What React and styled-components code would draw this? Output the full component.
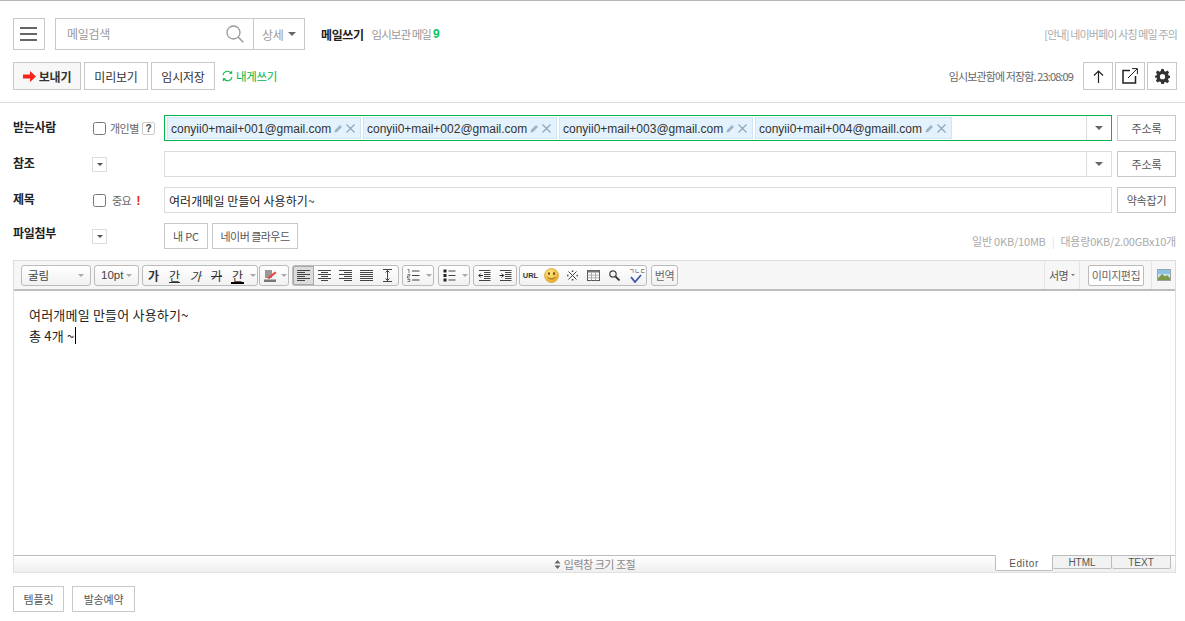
import React from "react";
import styled, { createGlobalStyle } from "styled-components";

const KR = `"Noto Sans CJK KR", "Liberation Sans", sans-serif`;
const LATIN = `"Liberation Sans", "Noto Sans CJK KR", sans-serif`;

const GlobalStyle = createGlobalStyle`
  html, body {
    margin: 0;
    padding: 0;
    background: #fff;
    overflow: hidden;
  }
  * {
    box-sizing: border-box;
  }
`;

const Page = styled.div`
  width: 1185px;
  height: 621px;
  border-top: 1px solid #b4b8bb;
  font-family: ${KR};
  font-size: 12px;
  color: #333;
`;
const Head = styled.div`
  display: flex;
  flex-direction: column;
  gap: 12px;
  padding: 17px 8px 12px 13px;
  border-bottom: 1px solid #ddd;
`;
const HeadRow = styled.div`
  display: flex;
  align-items: center;
`;
const Spacer = styled.div`
  flex: 1;
`;
const SquareButton = styled.button`
  display: flex;
  align-items: center;
  justify-content: center;
  width: ${(p) => p.$size || 30}px;
  height: ${(p) => p.$h || 28}px;
  margin-left: ${(p) => p.$ml || 0}px;
  padding: 0;
  background: #fff;
  border: 1px solid #c8c8c8;
`;
const SearchBox = styled.div`
  display: flex;
  align-items: center;
  width: 250px;
  height: 32px;
  margin-left: 10px;
  border: 1px solid #c8c8c8;
`;
const SearchText = styled.span`
  flex: 1;
  margin-top: -2px;
  padding-left: 11px;
  color: #999;
  font-size: 12px;
  letter-spacing: -0.3px;
`;
const SearchMore = styled.div`
  display: flex;
  align-items: center;
  gap: 5px;
  width: 51px;
  height: 30px;
  margin-left: 9px;
  padding-left: 8px;
  border-left: 1px solid #c8c8c8;
  color: #999;
  font-size: 12px;
  letter-spacing: -0.3px;
`;
const Caret = styled.i`
  display: block;
  width: 0;
  height: 0;
  border-left: ${(p) => p.$w || 4}px solid transparent;
  border-right: ${(p) => p.$w || 4}px solid transparent;
  border-top: ${(p) => p.$w || 4}px solid ${(p) => p.$color || "#666"};
`;
const PageTitle = styled.strong`
  margin-left: 16px;
  font-size: 12px;
  font-weight: 700;
  color: #222;
  letter-spacing: -0.4px;
`;
const DraftText = styled.span`
  margin-left: 8px;
  color: #999;
  font-size: 11.5px;
  letter-spacing: -0.95px;
`;
const DraftCount = styled.b`
  margin-left: 2px;
  color: #03c75a;
  font-family: ${LATIN};
  font-size: 12px;
`;
const Notice = styled.span`
  color: #aaa;
  font-size: 11px;
  letter-spacing: -0.85px;
`;
const TextButton = styled.button`
  display: flex;
  align-items: center;
  justify-content: center;
  gap: 3px;
  width: ${(p) => p.$w}px;
  height: ${(p) => p.$h || 28}px;
  margin-left: ${(p) => p.$ml || 0}px;
  padding: 0;
  background: ${(p) => (p.$primary ? "#f7f7f7" : "#fff")};
  border: 1px solid #c8c8c8;
  color: ${(p) => p.$color || "#333"};
  font-family: ${KR};
  font-size: ${(p) => p.$fs || 12}px;
  font-weight: ${(p) => (p.$primary ? 700 : 400)};
  letter-spacing: ${(p) => p.$ls ?? -0.2}px;
  white-space: nowrap;
`;
const SelfLink = styled.span`
  display: flex;
  align-items: center;
  gap: 3px;
  margin-left: 7px;
  color: #03b54a;
  font-size: 11.5px;
  letter-spacing: -0.3px;
`;
const SavedText = styled.span`
  margin-right: 10px;
  color: #666;
  font-size: 11px;
  letter-spacing: -0.88px;
`;
const Form = styled.div`
  display: flex;
  flex-direction: column;
  gap: 10px;
  padding: 12px 9px 0 13px;
`;
const FormRow = styled.div`
  display: flex;
  align-items: center;
  height: 26px;
`;
const Label = styled.label`
  width: 79px;
  margin-top: ${(p) => p.$mt ?? -3}px;
  color: #222;
  font-size: 12px;
  font-weight: 700;
  letter-spacing: -0.3px;
`;
const Option = styled.div`
  display: flex;
  align-items: center;
  width: 72px;
  color: #666;
  font-size: 11px;
  letter-spacing: -0.5px;
`;
const Check = styled.input.attrs({ type: "checkbox" })`
  width: 13px;
  height: 13px;
  margin: 0 ${(p) => p.$gap || 4}px 0 1px;
`;
const Help = styled.span`
  display: flex;
  align-items: center;
  justify-content: center;
  width: 13px;
  height: 13px;
  margin-left: 3px;
  border: 1px solid #ccc;
  border-radius: 2px;
  color: #444;
  font-family: ${LATIN};
  font-size: 10px;
  font-weight: 700;
`;
const Important = styled.b`
  margin-left: 5px;
  color: #f02d1c;
  font-family: ${LATIN};
  font-size: 13px;
`;
const Toggle = styled.span`
  display: flex;
  align-items: center;
  justify-content: center;
  width: 15px;
  height: 15px;
  border: 1px solid #ddd;
`;
const Field = styled.div`
  flex: 1;
  display: flex;
  align-items: center;
  height: 26px;
  padding-left: ${(p) => p.$pl || 0}px;
  border: 1px solid ${(p) => (p.$active ? "#03b54a" : "#ddd")};
  color: #222;
  font-size: 12px;
  letter-spacing: 0.08px;
`;
const Chips = styled.div`
  flex: 1;
  display: flex;
  gap: 2px;
  padding-left: 2px;
`;
const Chip = styled.div`
  display: flex;
  align-items: center;
  width: ${(p) => p.$w}px;
  height: 22px;
  padding: 2px 0 0 3px;
  background: #e4f2fd;
  border: 1px solid #cfe5f8;
  color: #333;
  font-family: ${LATIN};
  font-size: 12px;
  letter-spacing: 0;
  white-space: nowrap;
`;
const ChipIcons = styled.span`
  display: flex;
  align-items: center;
  gap: 3px;
  margin: -2px 0 0 3px;
`;
const FieldArrow = styled.div`
  display: flex;
  align-items: center;
  justify-content: center;
  width: 25px;
  height: 24px;
  border-left: 1px solid #ddd;
`;
const Side = styled.div`
  width: 64px;
  padding-left: 5px;
  display: flex;
`;
const AttachInfo = styled.span`
  margin: 0 0 0 auto;
  align-self: flex-end;
  color: #aaa;
  font-size: 11px;
  letter-spacing: -0.2px;
`;
const InfoBar = styled.i`
  margin: 0 6px;
  color: #d5e3ee;
  font-style: normal;
`;
const Editor = styled.div`
  margin: 11px 9px 0 13px;
  height: 313px;
  display: flex;
  flex-direction: column;
  border: 1px solid #ddd;
  border-bottom-color: #e2e2e2;
`;
const Toolbar = styled.div`
  display: flex;
  align-items: center;
  flex: none;
  height: 30px;
  padding: 0 0 0 7px;
  background: #f6f6f6;
  border-bottom: 2px solid #bdbdbd;
`;
const Select = styled.div`
  display: flex;
  align-items: center;
  justify-content: space-between;
  width: ${(p) => p.$w}px;
  height: 21px;
  margin-right: 3px;
  padding: 0 6px;
  background: linear-gradient(#fff, #f1f1f1);
  border: 1px solid #bbb;
  border-radius: 3px;
  color: #444;
  font-family: ${(p) => (p.$latin ? LATIN : KR)};
  font-size: 11.5px;
`;
const Group = styled.div`
  display: flex;
  align-items: center;
  height: 21px;
  margin-right: ${(p) => p.$mr ?? 3}px;
  background: linear-gradient(#fff, #f1f1f1);
  border: 1px solid #bbb;
  border-radius: 3px;
`;
const Tool = styled.span`
  position: relative;
  display: flex;
  align-items: center;
  justify-content: center;
  width: ${(p) => p.$w || 21}px;
  height: 19px;
  background: ${(p) => (p.$on ? "#dcdcdc" : "transparent")};
  box-shadow: ${(p) => (p.$on ? "inset 0 0 0 1px #a9a9a9" : "none")};
  color: #333;
  font-size: 12px;
  font-weight: ${(p) => (p.$bold ? 700 : 400)};
  font-style: ${(p) => (p.$italic ? "italic" : "normal")};
  text-decoration: ${(p) => p.$deco || "none"};
`;
const ColorBar = styled.i`
  position: absolute;
  left: 4px;
  right: 4px;
  bottom: 1px;
  height: 2px;
  background: #000;
`;
const UrlMark = styled.span`
  font-family: ${LATIN};
  font-size: 7.5px;
  font-weight: 700;
  color: #333;
`;
const SpellLetters = styled.span`
  position: absolute;
  top: 1px;
  left: 4px;
  font-size: 6px;
  line-height: 8px;
  color: #333;
`;
const SpellCheck = styled.svg`
  position: absolute;
  left: 5px;
  top: 8px;
`;
const TranslateTool = styled(Tool)`
  color: #666;
  font-size: 11px;
  letter-spacing: -0.4px;
`;
const SignBox = styled.div`
  display: flex;
  align-items: center;
  justify-content: center;
  gap: 3px;
  width: 36px;
  height: 28px;
  margin-left: auto;
  border-left: 1px solid #e4e4e4;
  border-right: 1px solid #e4e4e4;
  color: #555;
  font-size: 11px;
  letter-spacing: -0.6px;
`;
const ImageEdit = styled.span`
  display: flex;
  align-items: center;
  justify-content: center;
  width: 56px;
  height: 21px;
  margin-left: 8px;
  background: #fff;
  border: 1px solid #bbb;
  border-radius: 2px;
  color: #666;
  font-size: 11px;
  letter-spacing: -0.4px;
`;
const ImageSlot = styled.div`
  display: flex;
  align-items: center;
  justify-content: center;
  width: 24px;
  height: 28px;
  margin-left: 7px;
  border-left: 1px solid #e4e4e4;
`;
const Body = styled.div`
  flex: 1;
  padding: 13px 15px;
  color: #222;
  font-size: 13px;
  line-height: 21px;
  letter-spacing: 0.2px;
`;
const Cursor = styled.i`
  display: inline-block;
  width: 1px;
  height: 17px;
  margin-left: 1px;
  vertical-align: -3px;
  background: #000;
`;
const ResizeBar = styled.div`
  position: relative;
  display: flex;
  align-items: center;
  justify-content: center;
  gap: 3px;
  flex: none;
  height: 17px;
  background: linear-gradient(#fff, #efefef);
  border-top: 1px solid #bdbdbd;
  color: #888;
  font-size: 11px;
  letter-spacing: -0.5px;
`;
const Tabs = styled.div`
  position: absolute;
  right: 4px;
  top: -1px;
  display: flex;
`;
const Tab = styled.span`
  display: flex;
  align-items: center;
  justify-content: center;
  width: ${(p) => p.$w || 59}px;
  height: ${(p) => (p.$active ? 16 : 14)}px;
  background: ${(p) => (p.$active ? "#fff" : "#f2f2f2")};
  border: 1px solid #bdbdbd;
  border-top-color: ${(p) => (p.$active ? "#fff" : "#bdbdbd")};
  border-left-width: ${(p) => (p.$first ? 1 : 0)}px;
  border-radius: 0 0 2px 2px;
  color: #555;
  font-family: ${LATIN};
  font-size: 10px;
  letter-spacing: ${(p) => (p.$active ? "0.6px" : "0")};
`;
const Foot = styled.div`
  display: flex;
  gap: 8px;
  padding: 13px 0 0 13px;
`;

const Svg = ({ w = 13, h = 13, children }) => (
  <svg width={w} height={h} viewBox={`0 0 ${w} ${h}`} fill="none">
    {children}
  </svg>
);

const Lines = ({ rows }) => (
  <Svg w={13} h={13}>
    {rows.map(([x1, x2], i) => (
      <line key={i} x1={x1} x2={x2} y1={i * 2 + 1.5} y2={i * 2 + 1.5} stroke="#444" />
    ))}
  </Svg>
);

const Hamburger = () => (
  <Svg w={18} h={14}>
    <rect y="0" width="17" height="2" fill="#666" />
    <rect y="6" width="17" height="2" fill="#666" />
    <rect y="12" width="17" height="2" fill="#666" />
  </Svg>
);
const SearchIcon = () => (
  <Svg w={18} h={18}>
    <circle cx="7.5" cy="7.5" r="6.5" stroke="#999" strokeWidth="1.3" />
    <line x1="12.3" y1="12.3" x2="17.3" y2="17.3" stroke="#999" strokeWidth="1.5" />
  </Svg>
);
const SendArrow = () => (
  <Svg w={13} h={11}>
    <path d="M0 3.5H7V0L13 5.5L7 11V7.5H0Z" fill="#f8231d" />
  </Svg>
);
const Recycle = () => (
  <Svg w={11} h={12}>
    <path d="M1 5A4.5 4.5 0 0 1 8.6 2.6" stroke="#03b54a" strokeWidth="1.2" />
    <path d="M10 7A4.5 4.5 0 0 1 2.4 9.4" stroke="#03b54a" strokeWidth="1.2" />
    <path d="M7 3.8H10.2V0.6Z" fill="#03b54a" />
    <path d="M4 8.2H0.8V11.4Z" fill="#03b54a" />
  </Svg>
);
const UpIcon = () => (
  <Svg w={11} h={13}>
    <path d="M5.5 13V1M1 5.5L5.5 1L10 5.5" stroke="#222" strokeWidth="1.2" />
  </Svg>
);
const PopIcon = () => (
  <Svg w={16} h={16}>
    <path d="M8 2.5H1V15H13.5V8" stroke="#222" strokeWidth="1.5" />
    <path d="M6 10L15 1M10 0.6H15.4V6" stroke="#222" strokeWidth="1" />
  </Svg>
);
const GearIcon = () => (
  <svg width="15" height="15" viewBox="0 0 24 24">
    <path
      fill="#333"
      fillRule="evenodd"
      d="M10 0h4l.7 3.3 2.2.9 2.8-1.8 2.9 2.9-1.8 2.8.9 2.2L25 11v3l-3.3.7-.9 2.2 1.8 2.8-2.9 2.9-2.8-1.8-2.2.9L14 24h-4l-.7-3.3-2.2-.9-2.8 1.8-2.9-2.9 1.8-2.8-.9-2.2L-1 14v-3l3.3-.7.9-2.2L1.4 5.3l2.9-2.9 2.8 1.8 2.2-.9zM12 8a4.2 4.2 0 1 0 0 8.4a4.2 4.2 0 0 0 0-8.4z"
    />
  </svg>
);
const Pencil = () => (
  <Svg w={9} h={9}>
    <path d="M0.5 8.5L1 6L6 1L8 3L3 8Z" fill="#9db4c6" />
  </Svg>
);
const Cross = () => (
  <Svg w={9} h={9}>
    <path d="M0.5 0.5L8.5 8.5M8.5 0.5L0.5 8.5" stroke="#8aa6bb" strokeWidth="1.1" />
  </Svg>
);
const Smile = () => (
  <svg width="15" height="15" viewBox="0 0 15 15">
    <defs>
      <radialGradient id="smile" cx="40%" cy="30%" r="75%">
        <stop offset="0" stopColor="#ffe98a" />
        <stop offset="1" stopColor="#e8a91c" />
      </radialGradient>
    </defs>
    <circle cx="7.5" cy="7.5" r="7" fill="url(#smile)" stroke="#c9962a" strokeWidth="0.6" />
    <ellipse cx="5" cy="5.5" rx="1" ry="1.5" fill="#6b4a10" />
    <ellipse cx="10" cy="5.5" rx="1" ry="1.5" fill="#6b4a10" />
    <path d="M3.5 9.3Q7.5 12.8 11.5 9.3" stroke="#7b5512" strokeWidth="0.9" fill="none" />
  </svg>
);
const SpecialIcon = () => (
  <Svg w={11} h={11}>
    <path d="M1.5 1.5L9.5 9.5M9.5 1.5L1.5 9.5" stroke="#444" />
    <rect x="4.8" y="0.5" width="1.5" height="1.5" fill="#444" />
    <rect x="4.8" y="9" width="1.5" height="1.5" fill="#444" />
    <rect x="0" y="4.8" width="1.5" height="1.5" fill="#444" />
    <rect x="9.5" y="4.8" width="1.5" height="1.5" fill="#444" />
  </Svg>
);
const TableIcon = () => (
  <Svg w={13} h={11}>
    <rect x="0.5" y="0.5" width="12" height="10" fill="#fff" stroke="#555" />
    <rect x="0.5" y="0.5" width="12" height="2" fill="#777" />
    <path d="M4.5 2.5V10.5M8.5 2.5V10.5M0.5 5.2H12.5M0.5 7.8H12.5" stroke="#aaa" />
  </Svg>
);
const LensIcon = () => (
  <Svg w={11} h={11}>
    <circle cx="4" cy="4" r="3.2" stroke="#444" strokeWidth="1.2" />
    <line x1="6.5" y1="6.5" x2="10.5" y2="10.5" stroke="#333" strokeWidth="1.8" />
  </Svg>
);
const NumberList = () => (
  <Svg w={13} h={13}>
    <path d="M0.5 0.5H2V4M0.5 5.5H2.8V7H0.5V9H2.8M0.5 10.5H2.8V12.5H0.5" stroke="#444" strokeWidth="0.7" />
    <path d="M5 2H12.5M5 6.5H12.5M5 11H12.5" stroke="#444" />
  </Svg>
);
const BulletList = () => (
  <Svg w={13} h={13}>
    <rect x="0.5" y="0.5" width="3" height="3" fill="#222" />
    <rect x="0.5" y="5" width="3" height="3" fill="#222" />
    <rect x="0.5" y="9.5" width="3" height="3" fill="#222" />
    <path d="M5.5 2H12.5M5.5 6.5H12.5M5.5 11H12.5" stroke="#444" />
  </Svg>
);
const Indent = ({ out }) => (
  <Svg w={13} h={11}>
    <path d="M1 .5H12.5M6 2.5H12.5M6 4.5H12.5M6 6.5H12.5M6 8.5H12.5M1 10.5H12.5" stroke="#444" />
    {out ? (
      <path d="M5 5.5H1M2.8 3.5L.8 5.5L2.8 7.5" stroke="#222" />
    ) : (
      <path d="M0.5 5.5H4.5M2.7 3.5L4.7 5.5L2.7 7.5" stroke="#222" />
    )}
  </Svg>
);
const LineHeight = () => (
  <Svg w={11} h={13}>
    <path d="M1 .5H10M1 12.5H10M5.5 1V12M3.5 3.5L5.5 1.5L7.5 3.5M3.5 9.5L5.5 11.5L7.5 9.5" stroke="#444" />
  </Svg>
);
const Highlight = () => (
  <Svg w={13} h={13}>
    <rect x="0" y="10.5" width="12" height="2.5" fill="#777" />
    <rect x="1" y="1" width="7" height="8" fill="#999" />
    <path d="M3 9L11 2.5L12.5 4L5 10Z" fill="#e8443a" />
  </Svg>
);
const Landscape = () => (
  <Svg w={14} h={12}>
    <rect x="0.5" y="0.5" width="13" height="11" fill="#cfe3ef" stroke="#9aa5a5" />
    <rect x="1" y="1" width="12" height="4" fill="#8cc3e6" />
    <path d="M1 9L5 5L8 7.5L10 6L13 9V11H1Z" fill="#7c9a4a" />
  </Svg>
);

const emails = [
  ["conyii0+mail+001@gmail.com", 194],
  ["conyii0+mail+002@gmail.com", 194],
  ["conyii0+mail+003@gmail.com", 194],
  ["conyii0+mail+004@gmaill.com", 197],
];

const App = () => {
  return (
    <Page>
      <GlobalStyle />
      <Head>
        <HeadRow>
          <SquareButton $size={32} $h={32}>
            <Hamburger />
          </SquareButton>
          <SearchBox>
            <SearchText>메일검색</SearchText>
            <SearchIcon />
            <SearchMore>
              상세 <Caret />
            </SearchMore>
          </SearchBox>
          <PageTitle>메일쓰기</PageTitle>
          <DraftText>임시보관 메일</DraftText>
          <DraftCount>9</DraftCount>
          <Spacer />
          <Notice>[안내] 네이버페이 사칭 메일 주의</Notice>
        </HeadRow>
        <HeadRow>
          <TextButton $w={68} $primary>
            <SendArrow />
            보내기
          </TextButton>
          <TextButton $w={64} $ml={3}>미리보기</TextButton>
          <TextButton $w={64} $ml={3}>임시저장</TextButton>
          <SelfLink>
            <Recycle />
            내게쓰기
          </SelfLink>
          <Spacer />
          <SavedText>임시보관함에 저장함. 23:08:09</SavedText>
          <SquareButton><UpIcon /></SquareButton>
          <SquareButton $ml={2}><PopIcon /></SquareButton>
          <SquareButton $ml={2}><GearIcon /></SquareButton>
        </HeadRow>
      </Head>
      <Form>
        <FormRow>
          <Label>받는사람</Label>
          <Option>
            <Check />
            개인별
            <Help>?</Help>
          </Option>
          <Field $active>
            <Chips>
              {emails.map(([mail, width]) => (
                <Chip key={mail} $w={width}>
                  {mail}
                  <ChipIcons>
                    <Pencil />
                    <Cross />
                  </ChipIcons>
                </Chip>
              ))}
            </Chips>
            <FieldArrow><Caret /></FieldArrow>
          </Field>
          <Side>
            <TextButton $w={59} $h={26} $fs={11} $color="#555">주소록</TextButton>
          </Side>
        </FormRow>
        <FormRow>
          <Label>참조</Label>
          <Option>
            <Toggle><Caret $w={3} $color="#555" /></Toggle>
          </Option>
          <Field>
            <Spacer />
            <FieldArrow><Caret /></FieldArrow>
          </Field>
          <Side>
            <TextButton $w={59} $h={26} $fs={11} $color="#555">주소록</TextButton>
          </Side>
        </FormRow>
        <FormRow>
          <Label>제목</Label>
          <Option>
            <Check $gap={6} />
            중요
            <Important>!</Important>
          </Option>
          <Field $pl={4}>여러개메일 만들어 사용하기~</Field>
          <Side>
            <TextButton $w={59} $h={26} $fs={11} $color="#555">약속잡기</TextButton>
          </Side>
        </FormRow>
        <FormRow>
          <Label $mt={-7}>파일첨부</Label>
          <Option>
            <Toggle><Caret $w={3} $color="#555" /></Toggle>
          </Option>
          <TextButton $w={44} $h={26} $fs={11} $color="#555">내 PC</TextButton>
          <TextButton $w={86} $h={26} $ml={4} $fs={11} $ls={-0.55} $color="#555">네이버 클라우드</TextButton>
          <AttachInfo>
            일반 0KB/10MB
            <InfoBar>|</InfoBar>
            대용량0KB/2.00GBx10개
          </AttachInfo>
        </FormRow>
      </Form>
      <Editor>
        <Toolbar>
          <Select $w={70}>
            굴림 <Caret $w={3} $color="#aaa" />
          </Select>
          <Select $w={45} $latin>
            10pt <Caret $w={3} $color="#aaa" />
          </Select>
          <Group $mr={1}>
            <Tool $bold>가</Tool>
            <Tool $deco="underline">간</Tool>
            <Tool $italic>가</Tool>
            <Tool $deco="line-through">가</Tool>
            <Tool>
              간<ColorBar />
            </Tool>
            <Tool $w={9}><Caret $w={3} $color="#aaa" /></Tool>
          </Group>
          <Group>
            <Tool $w={20}><Highlight /></Tool>
            <Tool $w={8}><Caret $w={3} $color="#aaa" /></Tool>
          </Group>
          <Group>
            <Tool $on><Lines rows={[[0, 13], [0, 8], [0, 13], [0, 8], [0, 13], [0, 8]]} /></Tool>
            <Tool><Lines rows={[[0, 13], [3, 10], [0, 13], [3, 10], [0, 13], [3, 10]]} /></Tool>
            <Tool><Lines rows={[[0, 13], [5, 13], [0, 13], [5, 13], [0, 13], [5, 13]]} /></Tool>
            <Tool><Lines rows={[[0, 13], [0, 13], [0, 13], [0, 13], [0, 13], [0, 13]]} /></Tool>
            <Tool><LineHeight /></Tool>
          </Group>
          <Group $mr={4}>
            <Tool><NumberList /></Tool>
            <Tool $w={9}><Caret $w={3} $color="#aaa" /></Tool>
          </Group>
          <Group>
            <Tool><BulletList /></Tool>
            <Tool $w={9}><Caret $w={3} $color="#aaa" /></Tool>
          </Group>
          <Group $mr={2}>
            <Tool><Indent out /></Tool>
            <Tool><Indent /></Tool>
          </Group>
          <Group $mr={4}>
            <Tool><UrlMark>URL</UrlMark></Tool>
            <Tool><Smile /></Tool>
            <Tool><SpecialIcon /></Tool>
            <Tool><TableIcon /></Tool>
            <Tool><LensIcon /></Tool>
            <Tool>
              <SpellLetters>ㄱㄴㄷ</SpellLetters>
              <SpellCheck width="12" height="9" viewBox="0 0 12 9" fill="none">
                <path d="M1 3L5 8L11 1" stroke="#3a57a8" strokeWidth="1.8" />
              </SpellCheck>
            </Tool>
          </Group>
          <Group>
            <TranslateTool $w={25}>번역</TranslateTool>
          </Group>
          <SignBox>
            서명 <Caret $w={2} $color="#777" />
          </SignBox>
          <ImageEdit>이미지편집</ImageEdit>
          <ImageSlot><Landscape /></ImageSlot>
        </Toolbar>
        <Body>
          <div>여러개메일 만들어 사용하기~</div>
          <div>
            총 4개 ~<Cursor />
          </div>
        </Body>
        <ResizeBar>
          <Svg w={7} h={9}>
            <path d="M3.5 0L6.5 3.5H.5ZM3.5 9L.5 5.5H6.5Z" fill="#666" />
          </Svg>
          입력창 크기 조절
          <Tabs>
            <Tab $active $first $w={58}>Editor</Tab>
            <Tab>HTML</Tab>
            <Tab>TEXT</Tab>
          </Tabs>
        </ResizeBar>
      </Editor>
      <Foot>
        <TextButton $w={51} $h={26} $fs={11} $color="#555">템플릿</TextButton>
        <TextButton $w={63} $h={26} $fs={11} $color="#555">발송예약</TextButton>
      </Foot>
    </Page>
  );
};

export default App;
